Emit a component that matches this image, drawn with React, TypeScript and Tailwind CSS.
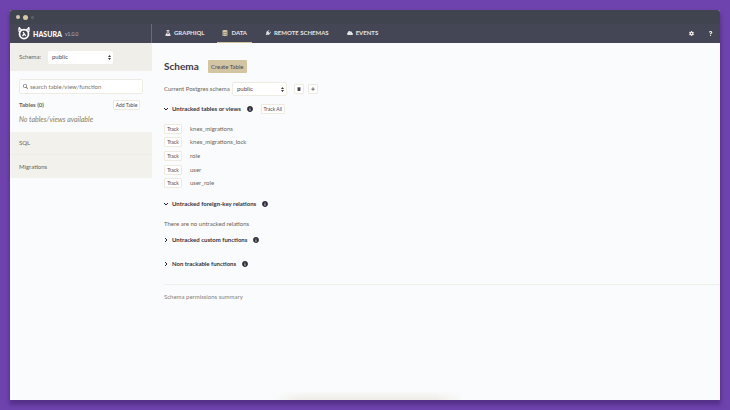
import React from "react";
import { FaFlask, FaDatabase, FaPlug, FaCloud, FaCog, FaQuestion, FaTrash, FaPlus, FaInfoCircle, FaSearch } from "react-icons/fa";

const tables = ["knex_migrations", "knex_migrations_lock", "role", "user", "user_role"];

function Logo() {
  return (
    <svg viewBox="0 0 24 26" className="h-[13px] w-[12px] shrink-0" fill="none" stroke="#fff" aria-hidden="true">
      <circle cx="12" cy="14" r="9" strokeWidth="3.500" />
      <path d="M3.500 11 C1.500 8 1.500 4 2.500 1 C3.500 3.500 5 5 8 6 M20.500 11 C22.500 8 22.500 4 21.500 1 C20.500 3.500 19 5 16 6" strokeWidth="2.500" />
      <path d="M10 10 L12.500 13.500 L9 18 M12.500 13.500 L15.500 18" strokeWidth="2.500" />
    </svg>
  );
}

function SchemaSelect({ id, className }: { id: string; className: string }) {
  return (
    <div className={"relative flex items-center rounded-[2px] bg-white " + className}>
      <select id={id} className="h-full w-full appearance-none bg-transparent pl-[4px] text-[6px] leading-[8px] text-[#4a4450] outline-none">
        <option>public</option>
      </select>
      <svg viewBox="0 0 6 10" className="pointer-events-none absolute right-[2px] h-[5px] w-[3px]" fill="#333" aria-hidden="true">
        <path d="M3 0 6 4H0zM3 10 0 6h6z" />
      </svg>
    </div>
  );
}

function NavItem({ icon, label, active }: { icon: React.ReactNode; label: string; active?: boolean }) {
  return (
    <a
      href="#"
      className={
        "flex items-center gap-[3px] border-b px-[5px] text-[6px] font-bold leading-[8px] text-[#e4e2e0] " +
        (active ? "border-[#d3c3a0]" : "border-transparent")
      }
    >
      {icon}
      {label}
    </a>
  );
}

function SmallButton({ children, className = "", label }: { children: React.ReactNode; className?: string; label?: string }) {
  return (
    <button
      type="button"
      aria-label={label}
      className={"flex h-[10px] shrink-0 items-center justify-center whitespace-nowrap rounded-[1px] border border-[#eeeae0] bg-white text-[5px] leading-[6px] text-[#4a4450] " + className}
    >
      {children}
    </button>
  );
}

function SectionTitle({ title, open, children }: { title: string; open?: boolean; children?: React.ReactNode }) {
  return (
    <div className="flex h-[10px] items-center">
      <button type="button" aria-expanded={!!open} className="flex items-center gap-[4px] font-bold text-[#35323f]">
        <svg viewBox="0 0 8 8" className="h-[4px] w-[4px]" fill="none" stroke="#222" strokeWidth="2" aria-hidden="true">
          <path d={open ? "M0 2l4 4 4-4" : "M2 0l4 4-4 4"} />
        </svg>
        {title}
      </button>
      <FaInfoCircle className="ml-[6px] h-[6px] w-[6px] text-[#2d2b38]" />
      {children}
    </div>
  );
}

export default function App() {
  return (
    <div className="flex min-h-screen bg-[#6f43ae] p-[10px] font-[Lato,'Open_Sans',sans-serif] text-[6px] leading-[8px] text-[#6d6454]">
      <div className="relative flex min-w-0 flex-1 flex-col overflow-hidden rounded-t-[2px] bg-[#fafbfc] shadow-[0_4px_4px_1px_#55318a]">
        <div className="flex h-[14px] items-center gap-[3px] bg-[#40444f] px-[6px]">
          <span className="h-[4px] w-[4px] rounded-full bg-[#d6c6b4]" />
          <span className="h-[5px] w-[5px] rounded-full bg-[#d9c9a2]" />
          <span className="h-[3px] w-[3px] rounded-full border border-[#77757f]" />
        </div>
        <header className="flex h-[19px] bg-[#454655]">
          <div className="flex w-[142px] shrink-0 items-center border-r border-[#6b6a76] pl-[8px]">
            <Logo />
            <span className="ml-[3px] text-[7px] font-black leading-[10px] text-white">HASURA</span>
            <span className="ml-[3px] text-[5px] text-[#b5b2ba]">v1.0.0</span>
          </div>
          <nav className="flex flex-1 gap-[8px] pl-[8px]">
            <NavItem icon={<FaFlask className="h-[6px] w-[6px]" />} label="GRAPHIQL" />
            <NavItem active icon={<FaDatabase className="h-[6px] w-[6px] text-[#d3c3a0]" />} label="DATA" />
            <NavItem icon={<FaPlug className="h-[6px] w-[6px] rotate-45" />} label="REMOTE SCHEMAS" />
            <NavItem icon={<FaCloud className="h-[6px] w-[6px]" />} label="EVENTS" />
          </nav>
          <div className="flex items-center gap-[14px] pr-[7px] text-[#f6f2e8]">
            <button type="button" aria-label="Settings"><FaCog className="h-[5px] w-[5px]" /></button>
            <button type="button" aria-label="Help"><FaQuestion className="h-[5px] w-[5px]" /></button>
          </div>
        </header>

        <div className="flex flex-1">
          <aside className="w-[142px] shrink-0">
            <div className="flex h-[28px] items-center gap-[5px] bg-[#f0eee9] pl-[9px]">
              <label htmlFor="side-schema" className="w-[24px]">Schema:</label>
              <SchemaSelect id="side-schema" className="h-[13px] w-[65px]" />
            </div>
            <div className="px-[9px] pt-[8px]">
              <label className="flex h-[15px] items-center gap-[2px] rounded-[2px] border border-[#eeebe3] bg-white pl-[3px]">
                <FaSearch className="h-[5px] w-[5px] text-[#777]" />
                <input aria-label="Search" placeholder="search table/view/function" className="min-w-0 flex-1 bg-transparent outline-none placeholder:text-[#7d7568]" />
              </label>
              <div className="mt-[6px] flex h-[10px] items-center justify-between pr-[3px]">
                <h2 className="font-bold">Tables (0)</h2>
                <SmallButton className="w-[27px]">Add Table</SmallButton>
              </div>
              <p className="mt-[5px] text-[7px] italic text-[#8a8062]">No tables/views available</p>
            </div>
            <div className="mt-[9px] flex flex-col bg-[#f3f1ec]">
              <a href="#" className="flex h-[23px] items-center border-b border-[#efece6] pl-[9px]">SQL</a>
              <a href="#" className="flex h-[23px] items-center pl-[9px]">Migrations</a>
            </div>
          </aside>

          <main className="min-w-0 flex-1 pt-[17px]">
            <div className="pl-[12px]">
              <div className="flex items-center gap-[9px]">
                <h1 className="text-[10px] font-bold leading-[13px] text-[#3c3947]">Schema</h1>
                <button type="button" className="h-[13px] w-[39px] whitespace-nowrap rounded-[1px] bg-[#d3c4a2] text-[6px] leading-[8px] text-[#4b4556]">Create Table</button>
              </div>
              <div className="mt-[9px] flex items-center">
                <label htmlFor="main-schema" className="mr-[4px] w-[64px] whitespace-nowrap">Current Postgres schema</label>
                <SchemaSelect id="main-schema" className="h-[14px] w-[55px] border border-[#eeebe3]" />
                <SmallButton label="Delete schema" className="ml-[7px] w-[10px]"><FaTrash className="h-[4px] w-[4px]" /></SmallButton>
                <SmallButton label="Create schema" className="ml-[4px] w-[10px]"><FaPlus className="h-[4px] w-[4px]" /></SmallButton>
              </div>
              <div className="mt-[8px]">
                <SectionTitle title="Untracked tables or views" open>
                  <SmallButton className="ml-[8px] w-[24px]">Track All</SmallButton>
                </SectionTitle>
              </div>
              <ul className="mt-[8px] grid h-[68px] auto-rows-fr">
                {tables.map((name) => (
                  <li key={name} className="flex items-center gap-[8px]">
                    <SmallButton className="w-[18px]">Track</SmallButton>
                    {name}
                  </li>
                ))}
              </ul>
              <div className="mt-[9px]">
                <SectionTitle title="Untracked foreign-key relations" open />
              </div>
              <p className="mt-[11px]">There are no untracked relations</p>
              <div className="mt-[7px] flex flex-col gap-[14px]">
                <SectionTitle title="Untracked custom functions" />
                <SectionTitle title="Non trackable functions" />
              </div>
            </div>
            <div className="ml-[12px] mt-[15px] border-t border-[#f0eee9] pt-[8px]">
              <p className="text-[#85827e]">Schema permissions summary</p>
            </div>
          </main>
        </div>
        <div className="pointer-events-none absolute bottom-0 left-[37%] h-[9px] w-[27%] bg-linear-to-t from-[#efece5] to-transparent mask-x-from-85%" />
      </div>
    </div>
  );
}
